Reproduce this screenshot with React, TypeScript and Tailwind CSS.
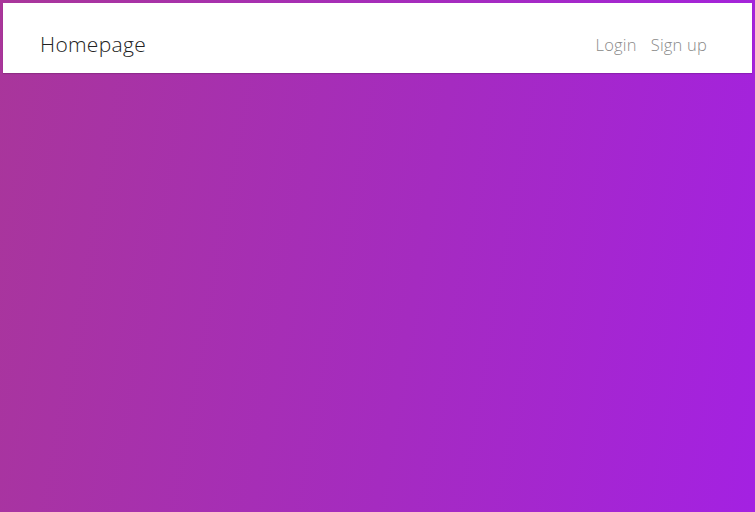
export default function App() {
  return (
    <div className="min-h-[512px] w-full bg-[linear-gradient(100deg,#a9369a_0%,#a52bc0_55%,#a421e2_100%)] p-[3px] font-['Open_Sans',sans-serif]">
      {/* Top bar */}
      <nav className="flex h-[70px] items-center justify-between bg-white pl-[37px] pr-[45px] pt-[14px] shadow-[0_1px_1px_rgba(0,0,0,0.15)]">
        <span className="text-[21px] font-light tracking-[0.3px] text-[#222]">Homepage</span>
        <div className="flex items-center gap-[14px] text-[16.5px] font-light tracking-[0.2px] text-[#8a8a8a]">
          <a href="#">Login</a>
          <a href="#">Sign up</a>
        </div>
      </nav>
    </div>
  );
}
